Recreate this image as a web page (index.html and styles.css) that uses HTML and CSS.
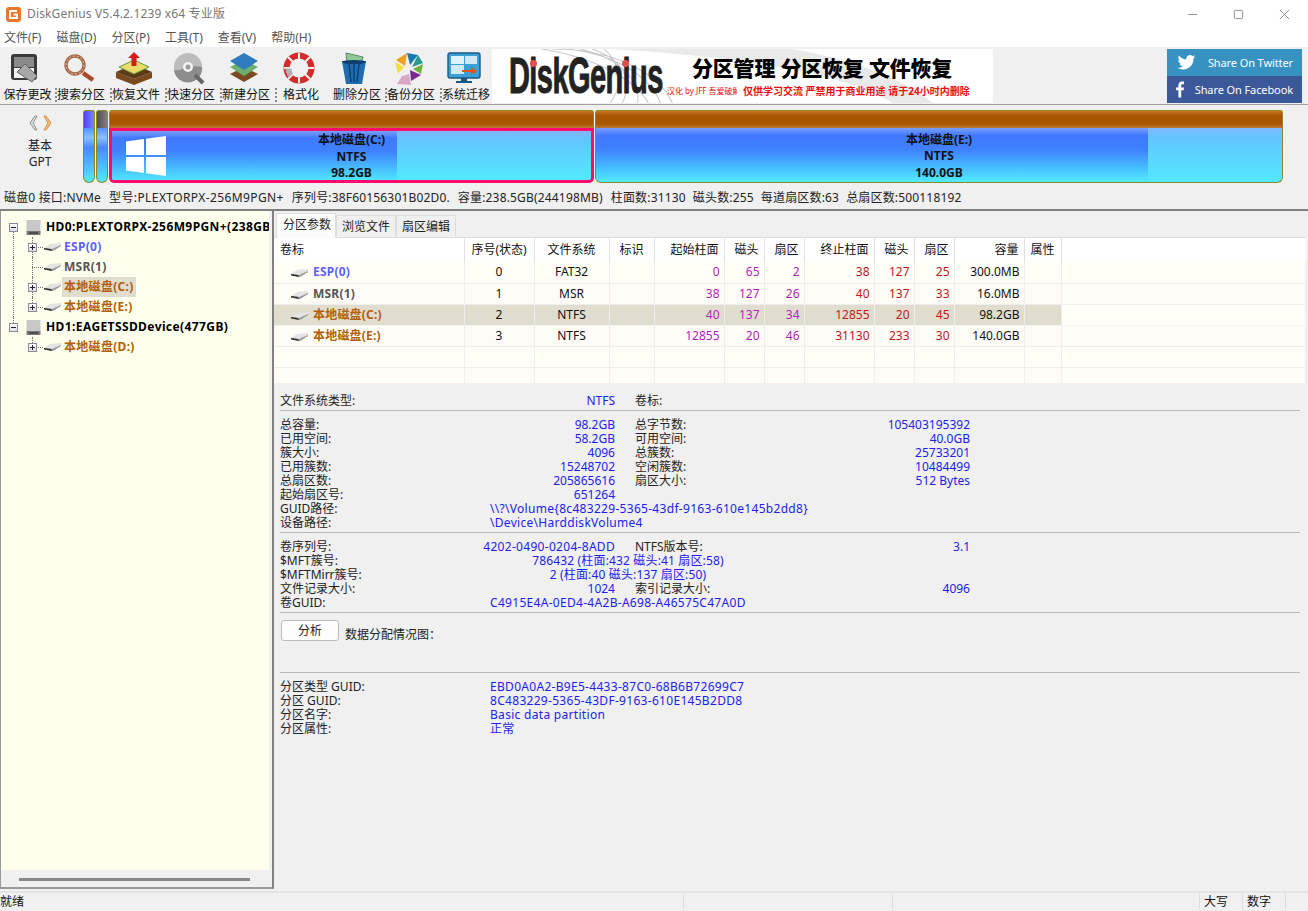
FILE: index.html
```html
<!DOCTYPE html>
<html lang="zh-CN">
<head>
  <meta charset="UTF-8">
  <title>DiskGenius V5.4.2.1239 x64 专业版</title>
  <link rel="stylesheet" href="styles.css">
</head>
<body>
  <svg class="defs" width="0" height="0">
    <symbol id="drive" viewBox="0 0 17 8">
      <path d="M0 5 L6 1 L17 0 L17 3 L9 8 L5 7 Z" fill="#e4e4e4"/>
      <path d="M0 5 L8 6 L17 2 L17 3 L9 8 L0 6 Z" fill="#9a9a9a"/>
      <path d="M0 5 L7 6 L8 8 L0 6.500 Z" fill="#333"/>
    </symbol>
    <symbol id="hd" viewBox="0 0 15 15">
      <rect x="0.5" y="0" width="14" height="11" fill="#c8c8c8"/>
      <rect x="0.5" y="11" width="14" height="4" fill="#777"/>
      <rect x="3" y="12.5" width="9" height="1" fill="#222"/>
    </symbol>
  </svg>

  <!-- title bar -->
  <div class="titlebar">
    <svg class="app-icon" viewBox="0 0 15 15">
      <rect width="15" height="15" rx="3" fill="#e9782c"/>
      <path d="M11 4 H4 V11 H11 V7.5 H7.5" fill="none" stroke="#fff" stroke-width="1.8"/>
    </svg>
    <span class="app-title">DiskGenius V5.4.2.1239 x64 专业版</span>
    <div class="win-controls">
      <svg viewBox="0 0 12 12"><path d="M1 6 H11" stroke="#888" stroke-width="1"/></svg>
      <svg viewBox="0 0 12 12"><rect x="1.5" y="1.5" width="9" height="9" rx="1" fill="none" stroke="#888"/></svg>
      <svg viewBox="0 0 12 12"><path d="M1 1 L11 11 M11 1 L1 11" stroke="#888" stroke-width="1"/></svg>
    </div>
  </div>

  <!-- menu -->
  <div class="menubar">
    <span>文件(F)</span><span>磁盘(D)</span><span>分区(P)</span><span>工具(T)</span><span>查看(V)</span><span>帮助(H)</span>
  </div>

  <!-- toolbar -->
  <div class="toolbar">
    <div class="tools">
      <div class="tool shift">
        <svg viewBox="0 0 34 34"><rect x="4" y="2" width="26" height="26" rx="3" fill="#3a3a3a"/><rect x="7" y="5" width="20" height="10" fill="#8a8a8a"/><rect x="7" y="16" width="20" height="10" fill="#f2f2f2"/><path d="M10 20 L18 12 L30 24 L25 30 Z" fill="#a8a8a8" stroke="#666"/></svg>
        <span>保存更改</span>
      </div>
      <div class="tool mark">
        <svg viewBox="0 0 34 34"><circle cx="13" cy="13" r="9" fill="none" stroke="#a8694a" stroke-width="3.4"/><circle cx="13" cy="13" r="9" fill="none" stroke="#e2c4b0" stroke-width="1" stroke-dasharray="2 2"/><path d="M21 21 L31 28" stroke="#a84a2a" stroke-width="4.5"/></svg>
        <span>搜索分区</span>
      </div>
      <div class="tool mark">
        <svg class="wide-icon" viewBox="0 0 38 34"><path d="M1 20 L19 27 L37 20 V26 L19 33 L1 26 Z" fill="#7a4a1e"/><path d="M1 20 L19 12 L37 20 L19 27 Z" fill="#5a3a18"/><path d="M4 15 L19 8 L34 15 L19 22 Z" fill="#e8dc6a" stroke="#6e9a3c"/><path d="M19 0 L25 6 H21.5 V14 H16.5 V6 H13 Z" fill="#d81c1c"/></svg>
        <span>恢复文件</span>
      </div>
      <div class="tool mark">
        <svg viewBox="0 0 34 34"><circle cx="16" cy="15" r="14" fill="#bcbcbc"/><path d="M2 18 C10 20 14 12 30 15 A14 14 0 0 1 2 18Z" fill="#8c8c8c"/><circle cx="16" cy="15" r="5" fill="#f2f2f2"/><circle cx="16" cy="15" r="2.5" fill="#9a9a9a"/><path d="M23 23 L31 31" stroke="#666" stroke-width="4"/></svg>
        <span>快速分区</span>
      </div>
      <div class="tool mark">
        <svg viewBox="0 0 34 34"><path d="M3 22 L17 15 L31 22 L17 30 Z" fill="#7a4a24"/><path d="M3 15 L17 8 L31 15 L17 24 Z" fill="#6cb070"/><path d="M3 9 L17 1 L31 9 L17 18 Z" fill="#2f7cbe"/></svg>
        <span>新建分区</span>
      </div>
      <div class="tool mark shift">
        <svg viewBox="0 0 34 34"><circle cx="17" cy="16" r="12.500" fill="none" stroke="#d42c2c" stroke-width="6"/><path d="M2 16 H10 M24 16 H32 M17 1 V7 M17 25 V31 M6 5 L11 10 M28 5 L23 10 M6 27 L11 22 M28 27 L23 22" stroke="#f0f0f0" stroke-width="2"/><path d="M3.500 16.500 A13 13 0 0 0 7 25.500 L11 21.500 A7 7 0 0 1 9.500 16.500 Z" fill="#b0b0b0"/></svg>
        <span>格式化</span>
      </div>
      <div class="tool shift">
        <svg viewBox="0 0 34 34"><path d="M9 1 L26 5 L24 14 H10 Z" fill="#8fc69a" stroke="#5a8a64"/><path d="M5 9 H29 L25 32 H9 Z" fill="#1f6cb0"/><path d="M12 12 L14 30 M17 12 V30 M22 12 L20 30" stroke="#0c3e70" stroke-width="1.4"/><ellipse cx="17" cy="10" rx="12" ry="2" fill="#0c3e70"/></svg>
        <span>删除分区</span>
      </div>
      <div class="tool mark">
        <svg viewBox="0 0 34 34"><path d="M15 1 L4 8 L13 14 Z" fill="#f0a020"/><path d="M15 1 L26 3 L18 13 Z" fill="#1a7ab0"/><path d="M26 3 L31 11 L20 15 Z" fill="#2a9a90"/><path d="M31 12 L29 22 L21 17 Z" fill="#70b040"/><path d="M29 23 L19 29 L18 18 Z" fill="#7a2a90"/><path d="M3 10 L12 15 L6 22 Z" fill="#f0e040"/><path d="M10 24 L17 22 L19 33 L5 32 Z" fill="#d8a8c8"/></svg>
        <span>备份分区</span>
      </div>
      <div class="tool mark">
        <svg viewBox="0 0 34 34"><rect x="1" y="1" width="32" height="25" rx="2" fill="#3aa0d8" stroke="#1a5a80" stroke-width="1.4"/><rect x="4" y="4" width="13" height="8" fill="#dff2fb"/><rect x="18" y="4" width="12" height="8" fill="#cfeaf7"/><rect x="4" y="13" width="13" height="9" fill="#cfeaf7"/><path d="M15 18 H24 V15 L30 19 L24 23 V20 H15 Z" fill="#e8501c"/><path d="M14 26 H20 V29 H25 V31 H9 V29 H14 Z" fill="#1a5a80"/></svg>
        <span>系统迁移</span>
      </div>
    </div>
    <div class="banner">
      <svg class="banner-waves" viewBox="0 0 500 54" preserveAspectRatio="none">
        <path d="M60 0 C130 0 170 30 180 54 M75 0 C130 6 160 32 168 54 M50 0 C110 10 145 34 156 54 M88 0 C130 10 150 34 145 54 M100 0 C135 12 140 34 130 54 M112 0 C130 16 130 38 118 54" fill="none" stroke="#c8c8c8"/>
        <path d="M120 0 H300 C360 10 410 30 440 54 H400 C360 30 280 10 120 0 Z" fill="#e9e9e9"/>
      </svg>
      <span class="banner-logo">DiskGenius</span>
      <i class="logo-dot dot-a"></i><i class="logo-dot dot-b"></i>
      <div class="banner-copy">
        <div class="banner-head">分区管理 分区恢复 文件恢复</div>
        <div class="banner-note"><small>汉化 by JFF 吾爱破解</small><b>仅供学习交流 严禁用于商业用途 请于24小时内删除</b></div>
      </div>
    </div>
    <div class="share">
      <div class="share-btn twitter">
        <svg viewBox="0 0 24 24"><path fill="#fff" d="M23 4.600c-.8.400-1.700.600-2.600.700.900-.600 1.700-1.400 2-2.500-.9.500-1.900.900-2.900 1.100a4.600 4.600 0 0 0-7.800 4.200C7.900 7.900 4.500 6.100 2.300 3.300c-1.200 2.100-.600 4.800 1.400 6.100-.7 0-1.400-.2-2.100-.6 0 2.200 1.600 4.100 3.700 4.600-.7.200-1.400.2-2.100.1.600 1.900 2.300 3.200 4.300 3.200A9.300 9.300 0 0 1 .7 18.600 13 13 0 0 0 20.800 7c.9-.6 1.600-1.400 2.200-2.400z"/></svg>
        <span>Share On Twitter</span>
      </div>
      <div class="share-btn facebook">
        <svg class="fb-icon" viewBox="0 0 10 20"><path fill="#fff" d="M3 20V11H0V7.500h3V5c0-3 1.800-5 4.500-5H10v3.500H8C6.800 3.500 6.500 4.200 6.500 5v2.500H10L9.500 11h-3v9z"/></svg>
        <span>Share On Facebook</span>
      </div>
    </div>
  </div>

  <!-- disk map -->
  <div class="diskmap">
    <div class="disk-nav">
      <div class="arrows">
        <svg viewBox="0 0 10 16"><path d="M7 1 L2 8 L7 15 L9 15 L5 8 L9 1 Z" fill="#e4e4e4" stroke="#8c8c8c"/></svg>
        <svg viewBox="0 0 10 16"><path d="M3 1 L8 8 L3 15 L1 15 L5 8 L1 1 Z" fill="#f4c080" stroke="#d89040"/></svg>
      </div>
      <div>基本</div>
      <div>GPT</div>
    </div>
    <div class="parts">
      <div class="part tiny"><div class="cap cap-esp"></div><div class="part-body"></div></div>
      <div class="part tiny"><div class="cap cap-msr"></div><div class="part-body"></div></div>
      <div class="part part-c">
        <div class="cap"></div>
        <div class="part-body selected">
          <div class="used" style="width: 59.5%"></div>
          <svg class="win-logo" viewBox="0 0 40 40"><path fill="#fff" d="M0 5.500 L18 3 V19 H0 Z M20 2.700 L40 0 V19 H20 Z M0 21 H18 V37 L0 34.500 Z M20 21 H40 V40 L20 37.300 Z"/></svg>
          <div class="part-label"><div>本地磁盘(C:)</div><div>NTFS</div><div>98.2GB</div></div>
        </div>
      </div>
      <div class="part part-e">
        <div class="cap"></div>
        <div class="part-body">
          <div class="used" style="width: 80.5%"></div>
          <div class="part-label"><div>本地磁盘(E:)</div><div>NTFS</div><div>140.0GB</div></div>
        </div>
      </div>
    </div>
  </div>

  <!-- disk info -->
  <div class="diskinfo">
    <span>磁盘0 接口:NVMe</span><span>型号:PLEXTORPX-256M9PGN+</span><span>序列号:38F60156301B02D0.</span><span>容量:238.5GB(244198MB)</span><span>柱面数:31130</span><span>磁头数:255</span><span>每道扇区数:63</span><span>总扇区数:500118192</span>
  </div>

  <div class="main">
    <!-- tree -->
    <div class="tree-panel">
      <div class="tree">
        <div class="node root">
          <span class="trunk first"><i class="exp minus"></i></span>
          <svg class="hd-icon"><use href="#hd"/></svg>
          <span class="name">HD0:PLEXTORPX-256M9PGN+(238GB)</span>
        </div>
        <div class="node">
          <span class="trunk"></span><span class="branch"><i class="exp plus"></i></span>
          <svg class="drv-icon"><use href="#drive"/></svg>
          <span class="name esp">ESP(0)</span>
        </div>
        <div class="node">
          <span class="trunk"></span><span class="branch"></span>
          <svg class="drv-icon"><use href="#drive"/></svg>
          <span class="name msr">MSR(1)</span>
        </div>
        <div class="node">
          <span class="trunk"></span><span class="branch"><i class="exp plus"></i></span>
          <svg class="drv-icon"><use href="#drive"/></svg>
          <span class="name ntfs current">本地磁盘(C:)</span>
        </div>
        <div class="node">
          <span class="trunk"></span><span class="branch last"><i class="exp plus"></i></span>
          <svg class="drv-icon"><use href="#drive"/></svg>
          <span class="name ntfs">本地磁盘(E:)</span>
        </div>
        <div class="node root">
          <span class="trunk end"><i class="exp minus"></i></span>
          <svg class="hd-icon"><use href="#hd"/></svg>
          <span class="name">HD1:EAGETSSDDevice(477GB)</span>
        </div>
        <div class="node">
          <span class="trunk none"></span><span class="branch last"><i class="exp plus"></i></span>
          <svg class="drv-icon"><use href="#drive"/></svg>
          <span class="name ntfs">本地磁盘(D:)</span>
        </div>
      </div>
      <div class="tree-scroll"><div class="thumb"></div></div>
    </div>

    <!-- right side -->
    <div class="content">
      <div class="tabs">
        <span class="tab active">分区参数</span><span class="tab">浏览文件</span><span class="tab">扇区编辑</span>
      </div>
      <div class="table-wrap">
        <table class="ptable">
          <colgroup>
            <col class="c-name"><col class="c-70"><col class="c-75"><col class="c-45"><col class="c-70"><col class="c-40"><col class="c-40"><col class="c-70"><col class="c-40"><col class="c-40"><col class="c-70"><col class="c-37"><col>
          </colgroup>
          <thead>
            <tr><th>卷标</th><th class="mid">序号(状态)</th><th class="mid">文件系统</th><th class="mid">标识</th><th class="num">起始柱面</th><th class="num">磁头</th><th class="num">扇区</th><th class="num">终止柱面</th><th class="num">磁头</th><th class="num">扇区</th><th class="num">容量</th><th class="mid">属性</th><th></th></tr>
          </thead>
          <tbody>
            <tr>
              <td class="vol"><svg class="drv-icon"><use href="#drive"/></svg><span class="esp">ESP(0)</span></td>
              <td class="mid">0</td><td class="mid">FAT32</td><td></td>
              <td class="num start">0</td><td class="num start">65</td><td class="num start">2</td>
              <td class="num stop">38</td><td class="num stop">127</td><td class="num stop">25</td>
              <td class="num">300.0MB</td><td></td><td></td>
            </tr>
            <tr>
              <td class="vol"><svg class="drv-icon"><use href="#drive"/></svg><span class="msr">MSR(1)</span></td>
              <td class="mid">1</td><td class="mid">MSR</td><td></td>
              <td class="num start">38</td><td class="num start">127</td><td class="num start">26</td>
              <td class="num stop">40</td><td class="num stop">137</td><td class="num stop">33</td>
              <td class="num">16.0MB</td><td></td><td></td>
            </tr>
            <tr class="sel">
              <td class="vol"><svg class="drv-icon"><use href="#drive"/></svg><span class="ntfs">本地磁盘(C:)</span></td>
              <td class="mid">2</td><td class="mid">NTFS</td><td></td>
              <td class="num start">40</td><td class="num start">137</td><td class="num start">34</td>
              <td class="num stop">12855</td><td class="num stop">20</td><td class="num stop">45</td>
              <td class="num">98.2GB</td><td></td><td class="blank"></td>
            </tr>
            <tr>
              <td class="vol"><svg class="drv-icon"><use href="#drive"/></svg><span class="ntfs">本地磁盘(E:)</span></td>
              <td class="mid">3</td><td class="mid">NTFS</td><td></td>
              <td class="num start">12855</td><td class="num start">20</td><td class="num start">46</td>
              <td class="num stop">31130</td><td class="num stop">233</td><td class="num stop">30</td>
              <td class="num">140.0GB</td><td></td><td></td>
            </tr>
            <tr><td></td><td></td><td></td><td></td><td></td><td></td><td></td><td></td><td></td><td></td><td></td><td></td><td></td></tr>
            <tr><td></td><td></td><td></td><td></td><td></td><td></td><td></td><td></td><td></td><td></td><td></td><td></td><td></td></tr>
          </tbody>
        </table>
      </div>

      <div class="details">
        <section class="info">
          <span>文件系统类型:</span><b>NTFS</b><em></em><span>卷标:</span><b></b>
        </section>
        <hr>
        <section class="info">
          <span>总容量:</span><b>98.2GB</b><em></em><span>总字节数:</span><b>105403195392</b>
          <span>已用空间:</span><b>58.2GB</b><em></em><span>可用空间:</span><b>40.0GB</b>
          <span>簇大小:</span><b>4096</b><em></em><span>总簇数:</span><b>25733201</b>
          <span>已用簇数:</span><b>15248702</b><em></em><span>空闲簇数:</span><b>10484499</b>
          <span>总扇区数:</span><b>205865616</b><em></em><span>扇区大小:</span><b>512 Bytes</b>
          <span>起始扇区号:</span><b>651264</b><em></em><span></span><b></b>
          <span>GUID路径:</span><b class="wide">\\?\Volume{8c483229-5365-43df-9163-610e145b2dd8}</b>
          <span>设备路径:</span><b class="wide">\Device\HarddiskVolume4</b>
        </section>
        <hr>
        <section class="info">
          <span>卷序列号:</span><b class="hex">4202-0490-0204-8ADD</b><em></em><span>NTFS版本号:</span><b>3.1</b>
          <span>$MFT簇号:</span><b class="mft">786432 (柱面:432 磁头:41 扇区:58)</b>
          <span>$MFTMirr簇号:</span><b class="mft">2 (柱面:40 磁头:137 扇区:50)</b>
          <span>文件记录大小:</span><b>1024</b><em></em><span>索引记录大小:</span><b>4096</b>
          <span>卷GUID:</span><b class="wide">C4915E4A-0ED4-4A2B-A698-A46575C47A0D</b>
        </section>
        <hr>
        <div class="analyze">
          <button class="btn">分析</button>
          <span>数据分配情况图：</span>
        </div>
        <hr>
        <section class="info">
          <span>分区类型 GUID:</span><b class="wide">EBD0A0A2-B9E5-4433-87C0-68B6B72699C7</b>
          <span>分区 GUID:</span><b class="wide">8C483229-5365-43DF-9163-610E145B2DD8</b>
          <span>分区名字:</span><b class="wide">Basic data partition</b>
          <span>分区属性:</span><b class="wide">正常</b>
        </section>
      </div>
    </div>
  </div>

  <!-- status bar -->
  <div class="statusbar">
    <span class="st st-main">就绪</span><span class="st st-a"></span><span class="st st-b"></span><span class="st st-c">大写</span><span class="st st-c">数字</span><span class="st st-d"></span>
  </div>
</body>
</html>
```
FILE: styles.css
```css
* {
  box-sizing: border-box;
}

html, body {
  margin: 0;
  height: 100%;
}

body {
  width: 1308px;
  height: 911px;
  overflow: hidden;
  display: flex;
  flex-direction: column;
  background: #f0f0f0;
  color: #111;
  font-family: "Noto Sans", "Noto Sans CJK SC", sans-serif;
  font-size: 12px;
  line-height: 14px;
}

.defs {
  position: absolute;
}

/* title and menu */
.titlebar {
  height: 30px;
  background: #fff;
  display: flex;
  align-items: center;
  padding-left: 6px;
  padding-bottom: 2px;
  flex: none;
}

.app-icon {
  width: 15px;
  height: 15px;
  margin-right: 6px;
}

.app-title {
  color: #777;
  letter-spacing: 0.15px;
}

.win-controls {
  margin-left: auto;
  display: flex;
  margin-right: 18px;
  gap: 35px;
}

.win-controls svg {
  width: 11px;
  height: 11px;
}

.menubar {
  height: 17px;
  background: #fff;
  display: flex;
  gap: 15px;
  padding-left: 4px;
  padding-top: 1px;
  color: #555;
  flex: none;
}

/* toolbar */
.toolbar {
  height: 58px;
  flex: none;
  display: flex;
  align-items: flex-start;
  border-bottom: 1px solid #a0a0a0;
  padding-top: 2px;
}

.tools {
  width: 492px;
  flex: none;
  display: flex;
  margin-top: 3px;
}

.tool {
  width: 55px;
  flex: none;
  display: flex;
  flex-direction: column;
  align-items: center;
  white-space: nowrap;
  font-size: 12px;
}

.tool:first-child {
  width: 54px;
  margin-left: -3px;
}

.tool svg {
  width: 34px;
  height: 34px;
  margin-bottom: 1.5px;
}

.tool svg.wide-icon {
  width: 38px;
}

.tool span {
  display: block;
  width: 47px;
  text-align: center;
}

.tool.mark span {
  border-left: 2px dotted #888;
}

.tool.shift span {
  padding-left: 3px;
}

.banner {
  position: relative;
  width: 501px;
  height: 54px;
  background: #fff;
  flex: none;
  overflow: hidden;
}

.banner-waves {
  position: absolute;
  left: 0;
  top: 0;
  width: 100%;
  height: 100%;
}

.banner-logo {
  position: absolute;
  left: 17px;
  top: 3px;
  font-family: "Liberation Sans", sans-serif;
  font-weight: bold;
  font-size: 50px;
  line-height: 48px;
  letter-spacing: -1px;
  color: #222;
  transform: scaleX(0.58);
  transform-origin: left top;
  -webkit-text-stroke: 1px #222;
}

.logo-dot {
  position: absolute;
  top: 11px;
  width: 7px;
  height: 7px;
  border-radius: 50%;
  background: #e05050;
}

.dot-a { left: 38px; }
.dot-b { left: 130px; }

.banner-copy {
  position: absolute;
  left: 175px;
  top: 6px;
  white-space: nowrap;
}

.banner-head {
  margin-left: 25px;
  font-size: 21px;
  line-height: 26px;
  font-weight: 900;
  letter-spacing: -0.2px;
  color: #000;
}

.banner-note {
  margin-top: 3px;
  color: #e81010;
  display: flex;
  align-items: center;
  gap: 6px;
  font-size: 10px;
  line-height: 14px;
}

.banner-note small {
  font-size: 8px;
  width: 70px;
  overflow: hidden;
}

.share {
  margin-left: auto;
  margin-right: 6px;
  width: 135px;
  color: #fff;
}

.share-btn {
  height: 27px;
  display: flex;
  align-items: center;
  justify-content: flex-end;
  padding-right: 9px;
  font-size: 11px;
  letter-spacing: -0.1px;
  position: relative;
}

.share-btn svg {
  position: absolute;
  left: 10px;
  top: 4px;
  width: 19px;
  height: 19px;
}

.share-btn svg.fb-icon {
  left: 9px;
  width: 8px;
}

.twitter { background: #3792c1; }
.facebook { background: #3b5998; }

/* disk map */
.diskmap {
  height: 80px;
  flex: none;
  display: flex;
  padding-top: 5px;
}

.disk-nav {
  width: 83px;
  padding-right: 3px;
  padding-top: 5px;
  text-align: center;
  line-height: 16px;
  color: #222;
}

.arrows {
  display: flex;
  justify-content: center;
  gap: 5px;
  height: 16px;
  margin-bottom: 7px;
}

.arrows svg {
  width: 10px;
  height: 16px;
}

.parts {
  display: flex;
  gap: 1px;
  height: 73px;
  width: 1199px;
}

.part {
  display: flex;
  flex-direction: column;
  flex: none;
}

.tiny { width: 12px; }
.part-c { width: 485px; }
.part-e { width: 688px; }

.cap {
  height: 18px;
  background: linear-gradient(#c87a2a, #a85600 25%, #a85600 75%, #bd7a38);
  border: 1px solid #8a8a20;
  border-bottom: 0;
  border-radius: 3px 3px 0 0;
}

.cap-esp { background: linear-gradient(90deg, #4848e8, #8080ff); }
.cap-msr { background: linear-gradient(90deg, #505050, #808080); }

.part-body {
  flex: 1;
  min-height: 0;
  position: relative;
  display: grid;
  border: 1px solid #8a8a20;
  border-top: 0;
  border-radius: 0 0 6px 6px;
  background: linear-gradient(#7fb8ff, #6cc0ff 12%, #62c6ff 20%, #52eaff);
  overflow: hidden;
}

.tiny .part-body {
  background: linear-gradient(#5a90ff, #8cc0ff 18%, #4c88ff 36%, #52eaff);
}

.part-body.selected {
  border: 3px solid #ff0a6e;
  border-radius: 0 0 5px 5px;
}

.used {
  grid-area: 1 / 1;
  background: linear-gradient(#7a9fff, #3f78ff 14%, #3f82ff 40%, #50ecff);
}

.part-label {
  grid-area: 1 / 1;
  justify-self: center;
  align-self: center;
  z-index: 1;
  text-align: center;
  font-weight: bold;
  line-height: 16.5px;
  color: #111;
  white-space: nowrap;
  padding-top: 3px;
}

.selected .part-label {
  padding-top: 1px;
}

.win-logo {
  position: absolute;
  left: 14px;
  top: 5px;
  width: 40px;
  height: 40px;
}

/* disk info line */
.diskinfo {
  height: 24px;
  flex: none;
  display: flex;
  align-items: center;
  gap: 8px;
  padding-left: 4px;
  padding-top: 2px;
  white-space: nowrap;
  color: #222;
  letter-spacing: 0.17px;
}

.diskinfo span:nth-child(2) {
  letter-spacing: 0.4px;
}

.diskinfo span:nth-child(n+6) {
  margin-left: -1px;
}

/* main split */
.main {
  flex: 1;
  min-height: 0;
  display: flex;
  border-top: 2px solid #808080;
}

.tree-panel {
  width: 274px;
  flex: none;
  display: flex;
  flex-direction: column;
  border-right: 2px solid #808080;
  border-bottom: 2px solid #999;
  border-left: 1px solid #999;
  margin-bottom: 2px;
  padding-right: 3px;
  background: #f0f0f0;
}

.tree {
  flex: 1;
  background: #ffffee;
  padding-top: 6px;
  overflow: hidden;
}

.node {
  height: 20px;
  display: flex;
  align-items: center;
  padding-left: 12px;
  white-space: nowrap;
}

.name {
  font-weight: bold;
  line-height: 20px;
  letter-spacing: 0.3px;
  flex: none;
}

.root .name {
  color: #000;
  letter-spacing: 0.4px;
}

.esp { color: #6060ff; font-weight: bold; }
.msr { color: #555; font-weight: bold; }
.ntfs { color: #b45f06; font-weight: bold; }

.name.current {
  background: #e0ddcf;
  padding: 0 2px;
  margin-left: -2px;
}

.trunk, .branch {
  position: relative;
  align-self: stretch;
  flex: none;
}

.trunk {
  width: 13px;
  border-left: 1px dotted #777;
}

.node:not(.root) .trunk {
  width: 19px;
}

.trunk.first, .trunk.end {
  border-left: 0;
}

.trunk.first::before, .trunk.end::before {
  content: "";
  position: absolute;
  left: 0;
  border-left: 1px dotted #777;
}

.trunk.first::before { top: 50%; bottom: 0; }
.trunk.end::before { top: 0; bottom: 50%; }

.trunk.none {
  border-left: 0;
}

.branch {
  width: 11px;
  margin-right: 1px;
}

.branch::before {
  content: "";
  position: absolute;
  left: 0;
  top: 0;
  bottom: 0;
  border-left: 1px dotted #777;
}

.branch.last::before {
  bottom: 50%;
}

.branch::after {
  content: "";
  position: absolute;
  left: 0;
  right: 0;
  top: 50%;
  border-top: 1px dotted #777;
}

.exp {
  position: absolute;
  z-index: 1;
  top: 6px;
  left: -4px;
  width: 9px;
  height: 9px;
  border: 1px solid #8a8a9a;
  background: linear-gradient(#fff, #dcdce4);
}

.exp::before {
  content: "";
  position: absolute;
  left: 1px;
  right: 1px;
  top: 3px;
  height: 1px;
  background: #223;
}

.exp.plus::after {
  content: "";
  position: absolute;
  top: 1px;
  bottom: 1px;
  left: 3px;
  width: 1px;
  background: #223;
}

.hd-icon {
  width: 15px;
  height: 15px;
  flex: none;
  margin-right: 5px;
}

.drv-icon {
  width: 17px;
  height: 8px;
  flex: none;
}

.node .drv-icon {
  margin-right: 3px;
}

.tree-scroll {
  height: 17px;
  flex: none;
  padding: 8px 19px 0 18px;
}

.thumb {
  height: 3px;
  background: #888;
}

/* right pane */
.content {
  flex: 1;
  min-width: 0;
  padding-right: 2px;
}

.tabs {
  height: 27px;
  display: flex;
  align-items: flex-end;
  padding-left: 2px;
  border-bottom: 1px solid #ddd;
}

.tab {
  height: 22px;
  padding: 0 5px;
  line-height: 22px;
  background: #f0f0f0;
  border: 1px solid #ddd;
  border-bottom: 0;
  white-space: nowrap;
  color: #222;
}

.tab.active {
  height: 25px;
  background: #fcfcfc;
  padding: 0 4px 0 6px;
  margin-bottom: -1px;
}

.table-wrap {
  height: 145px;
  overflow: hidden;
}

.ptable {
  table-layout: fixed;
  border-collapse: collapse;
  width: 100%;
}

.c-name { width: 190px; }
.c-70 { width: 70px; }
.c-75 { width: 75px; }
.c-45 { width: 45px; }
.c-40 { width: 40px; }
.c-37 { width: 37px; }

.ptable th {
  height: 24px;
  background: #fff;
  font-weight: normal;
  text-align: left;
  padding: 0 5px;
  white-space: nowrap;
  border-right: 1px solid #e2e2e2;
}

.ptable th:first-child {
  padding-left: 6px;
}

.ptable th:last-child {
  border-right: 0;
}

.ptable td {
  height: 21px;
  padding: 0 4px;
  white-space: nowrap;
  border-right: 1px solid #eee;
  border-bottom: 1px solid #eee;
  background: #fffff8;
}

.ptable tbody tr:nth-child(even) td {
  background: #fffcf8;
}

.ptable tbody tr.sel td {
  background: #e0ddcf;
  border-bottom-color: #f4f4f0;
}

.ptable tbody tr.sel td.blank {
  background: #fffff8;
}

.ptable .mid { text-align: center; }
.ptable .num { text-align: right; }

.start { color: #b41cc0; }
.stop { color: #c01818; }

.ptable .vol {
  padding-left: 17px;
}

.vol .drv-icon {
  margin-right: 5px;
  vertical-align: -1px;
}

.vol span {
  letter-spacing: 0.2px;
}

/* details */
.details {
  padding: 11px 6px 0 5px;
}

.details hr {
  margin: 2px 0 7px 1px;
  height: 1px;
  border: 0;
  background: #b8b8b8;
}

.info {
  display: grid;
  grid-template-columns: 210px 125px 20px 210px 125px;
  grid-auto-rows: 14px;
  white-space: nowrap;
  color: #222;
  padding-left: 1px;
}

.info b {
  font-weight: normal;
  color: #1c1cf0;
  justify-self: end;
}

.info b.hex {
  letter-spacing: 0.3px;
}

.info b.wide {
  grid-column: 2 / -1;
  justify-self: start;
  letter-spacing: 0.3px;
}

.info b.mft {
  grid-column: 2 / -1;
  justify-self: start;
  width: 276px;
  text-align: center;
  letter-spacing: 0.15px;
}

.analyze {
  height: 50px;
  margin-top: 3px;
  display: flex;
  align-items: flex-start;
  gap: 6px;
  padding-left: 2px;
}

.analyze span {
  margin-top: 8px;
  color: #222;
}

.btn {
  width: 58px;
  height: 21px;
  padding: 0;
  font: inherit;
  color: #222;
  background: #fdfdfd;
  border: 1px solid #bbb;
  border-radius: 3px;
}

/* status bar */
.statusbar {
  height: 20px;
  flex: none;
  display: flex;
  border-top: 2px solid #e4e4e4;
  color: #111;
  line-height: 18px;
}

.st {
  flex: none;
  border-right: 1px solid #ddd;
  height: 17px;
  padding-left: 4px;
}

.st-main { width: 684px; padding-left: 0; }
.st-a { width: 209px; }
.st-b { width: 307px; }
.st-c { width: 43px; }
.st-d { flex: 1; border-right: 0; }
```
